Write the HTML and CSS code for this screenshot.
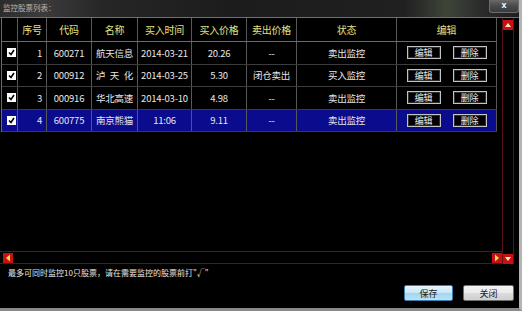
FILE: index.html
```html
<!DOCTYPE html>
<html lang="zh-CN">
<head>
    <meta charset="UTF-8">
    <title>监控股票列表</title>
    <link rel="stylesheet" href="styles.css">
</head>
<body>
    <div class="window">
        <div class="titlebar">
            <span class="title">监控股票列表：</span>
            <span class="close">x</span>
        </div>

        <div class="pane">
            <div class="grid">
                <div class="row head">
                    <div class="c"></div>
                    <div class="c">序号</div>
                    <div class="c">代码</div>
                    <div class="c">名称</div>
                    <div class="c">买入时间</div>
                    <div class="c">买入价格</div>
                    <div class="c">卖出价格</div>
                    <div class="c">状态</div>
                    <div class="c">编辑</div>
                </div>
                <div class="row">
                    <div class="c chk"><span class="box"><svg viewBox="0 0 9 9"><polyline points="2,4.5 4,6.5 7,2" /></svg></span></div>
                    <div class="c num">1</div>
                    <div class="c">600271</div>
                    <div class="c">航天信息</div>
                    <div class="c">2014-03-21</div>
                    <div class="c">20.26</div>
                    <div class="c">--</div>
                    <div class="c">卖出监控</div>
                    <div class="c ops"><span class="ebtn">编辑</span><span class="ebtn">删除</span></div>
                </div>
                <div class="row">
                    <div class="c chk"><span class="box"><svg viewBox="0 0 9 9"><polyline points="2,4.5 4,6.5 7,2" /></svg></span></div>
                    <div class="c num">2</div>
                    <div class="c">000912</div>
                    <div class="c">泸&ensp;天&ensp;化</div>
                    <div class="c">2014-03-25</div>
                    <div class="c">5.30</div>
                    <div class="c">闭仓卖出</div>
                    <div class="c">买入监控</div>
                    <div class="c ops"><span class="ebtn">编辑</span><span class="ebtn">删除</span></div>
                </div>
                <div class="row">
                    <div class="c chk"><span class="box"><svg viewBox="0 0 9 9"><polyline points="2,4.5 4,6.5 7,2" /></svg></span></div>
                    <div class="c num">3</div>
                    <div class="c">000916</div>
                    <div class="c">华北高速</div>
                    <div class="c">2014-03-10</div>
                    <div class="c">4.98</div>
                    <div class="c">--</div>
                    <div class="c">卖出监控</div>
                    <div class="c ops"><span class="ebtn">编辑</span><span class="ebtn">删除</span></div>
                </div>
                <div class="row sel">
                    <div class="c chk"><span class="box"><svg viewBox="0 0 9 9"><polyline points="2,4.5 4,6.5 7,2" /></svg></span></div>
                    <div class="c num">4</div>
                    <div class="c">600775</div>
                    <div class="c">南京熊猫</div>
                    <div class="c">11:06</div>
                    <div class="c">9.11</div>
                    <div class="c">--</div>
                    <div class="c">卖出监控</div>
                    <div class="c ops"><span class="ebtn">编辑</span><span class="ebtn">删除</span></div>
                </div>
            </div>

            <div class="vscroll">
                <svg class="arrow" viewBox="0 0 10 10"><rect width="10" height="10" /><polygon points="2,7 8,7 5,3" /></svg>
                <svg class="arrow" viewBox="0 0 10 10"><rect width="10" height="10" /><polygon points="2,3 8,3 5,7" /></svg>
            </div>

            <div class="hscroll">
                <svg class="arrow side" viewBox="0 0 10 10"><rect width="10" height="10" /><polygon points="7,1.5 7,8.5 3,5" /></svg>
                <svg class="arrow side" viewBox="0 0 10 10"><rect width="10" height="10" /><polygon points="3,1.5 3,8.5 7,5" /></svg>
            </div>
        </div>

        <div class="note">最多可同时监控10只股票，请在需要监控的股票前打"√"</div>

        <div class="actions">
            <button class="btn save">保存</button>
            <button class="btn">关闭</button>
        </div>
    </div>
</body>
</html>
```

FILE: styles.css
```css
body {
    margin: 0;
    width: 522px;
    height: 311px;
    background-color: #000;
    font-family: "Noto Sans CJK SC", "Liberation Sans", sans-serif;
    overflow: hidden;
}
.window {
    box-sizing: border-box;
    height: 311px;
    display: flex;
    flex-direction: column;
    border-right: 3px solid #b4b4b4;
    border-bottom: 3px solid #8a8a8a;
}
.titlebar {
    height: 17px;
    display: flex;
    justify-content: space-between;
    align-items: flex-start;
    background: linear-gradient(90deg, #2c2c2c 0, #3c3c3c 8%, #262626 20%, #1c1c1c 45%, #202020 78%, #3e4538 86%, #2a2a2a 93%, #1e1e1e 100%);
}
.title {
    font-size: 7.5px;
    line-height: 12px;
    color: #b4b4b4;
    padding: 2px 0 0 3px;
}
.close {
    width: 30px;
    height: 13px;
    box-sizing: border-box;
    border: 1px solid #6c6c6c;
    border-top: none;
    border-radius: 0 0 3px 3px;
    background: linear-gradient(#6a6a6a, #4a4a4a 50%, #3a3a3a);
    color: #fff;
    font: bold 9px/11px "Liberation Sans", sans-serif;
    text-align: center;
}
.pane {
    display: grid;
    grid-template-columns: 502px 12px;
    grid-template-rows: 233px 13px;
    border-top: 1px solid #707070;
}
.grid {
    grid-column: 1;
    grid-row: 1;
    margin-left: 1px;
    border-left: 1px solid #6a6a6a;
    align-self: start;
    width: 495px;
}
.row {
    box-sizing: border-box;
    display: grid;
    grid-template-columns: 16px 29px 45px 46px 54px 55px 50px 100px 100px;
    height: 22.5px;
    border-bottom: 1px solid #3c3c3c;
    font-size: 9.5px;
    color: #e6e6e6;
}
.row.head {
    height: 24px;
    border-bottom: 1px solid #6a6a6a;
    font-size: 10px;
    color: #e0e084;
}
.row.sel {
    background-color: #0b0b8e;
}
.c {
    box-sizing: border-box;
    border-right: 1px solid #585858;
    display: flex;
    align-items: center;
    justify-content: center;
    white-space: pre;
    letter-spacing: -0.2px;
}
.c.num {
    justify-content: flex-end;
    padding-right: 4px;
}
.c.chk {
    padding-left: 3px;
}
.box {
    width: 9px;
    height: 9px;
    background-color: #fff;
    display: flex;
}
.box svg {
    width: 9px;
    height: 9px;
    fill: none;
    stroke: #000;
    stroke-width: 1.6;
}
.c.ops {
    gap: 12px;
}
.ebtn {
    box-sizing: border-box;
    width: 34px;
    height: 13px;
    border: 1px solid #c4c4c4;
    box-shadow: inset 0 0 0 1px #2e2e2e;
    background-color: #000;
    color: #f0f0f0;
    font-size: 9px;
    line-height: 11px;
    text-align: center;
}
.vscroll {
    grid-column: 2;
    grid-row: 1 / 3;
    border-left: 1px solid #5a1414;
    border-right: 1px solid #5a1414;
    display: flex;
    flex-direction: column;
    justify-content: space-between;
    padding: 2px 0 0 0;
}
.hscroll {
    grid-column: 1;
    grid-row: 2;
    box-sizing: border-box;
    border-top: 1px solid #5a1414;
    border-bottom: 1px solid #5a1414;
    display: flex;
    justify-content: space-between;
    align-items: center;
    padding: 0 0 0 3px;
}
.arrow {
    width: 10px;
    height: 10px;
    display: block;
}
.arrow rect {
    fill: #c81010;
}
.arrow polygon {
    fill: #ffe6c8;
}
.arrow.side polygon {
    fill: #f6dc4c;
}
.note {
    margin-top: 3px;
    padding-left: 8px;
    font-size: 8px;
    line-height: 12px;
    color: #e6e6e6;
}
.actions {
    display: flex;
    justify-content: flex-end;
    gap: 10px;
    margin-top: 6px;
    padding-right: 5px;
}
.btn {
    height: 16px;
    width: 51px;
    padding: 0;
    font-family: "Noto Sans CJK SC", sans-serif;
    font-size: 9px;
    color: #1a1a1a;
    border: 1px solid #707070;
    border-radius: 2px;
    background: linear-gradient(#f2f2f2, #ebebeb 48%, #dcdcdc 52%, #cfcfcf);
}
.btn.save {
    width: 49px;
    border-color: #3c7fb1;
    background: linear-gradient(#e8f6fd, #c6e7f8 48%, #a2d6f2 52%, #b8e2f6);
}
```
